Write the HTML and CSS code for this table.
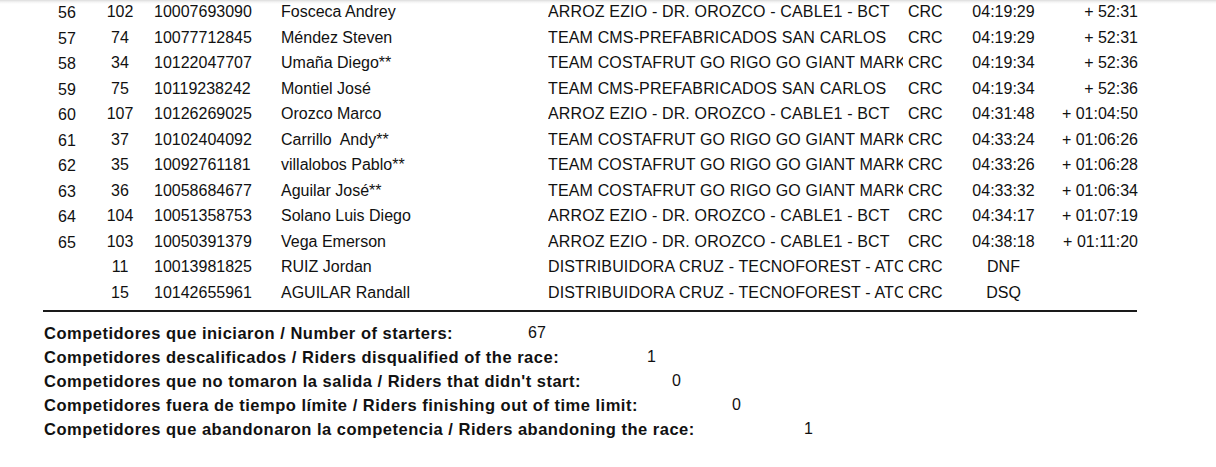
FILE: index.html
```html
<!DOCTYPE html>
<html lang="es">
<head>
<meta charset="utf-8">
<title>Clasificación</title>
<link rel="stylesheet" href="styles.css">
</head>
<body>
<div class="page">
  <div class="results">
    <div class="row"><span class="pos">56</span><span class="bib">102</span><span class="uci">10007693090</span><span class="name">Fosceca Andrey</span><span class="team">ARROZ EZIO - DR. OROZCO - CABLE1 - BCT</span><span class="nat">CRC</span><span class="time">04:19:29</span><span class="gap">+ 52:31</span></div>
    <div class="row"><span class="pos">57</span><span class="bib">74</span><span class="uci">10077712845</span><span class="name">Méndez Steven</span><span class="team">TEAM CMS-PREFABRICADOS SAN CARLOS</span><span class="nat">CRC</span><span class="time">04:19:29</span><span class="gap">+ 52:31</span></div>
    <div class="row"><span class="pos">58</span><span class="bib">34</span><span class="uci">10122047707</span><span class="name">Umaña Diego**</span><span class="team">TEAM COSTAFRUT GO RIGO GO GIANT MARKET</span><span class="nat">CRC</span><span class="time">04:19:34</span><span class="gap">+ 52:36</span></div>
    <div class="row"><span class="pos">59</span><span class="bib">75</span><span class="uci">10119238242</span><span class="name">Montiel José</span><span class="team">TEAM CMS-PREFABRICADOS SAN CARLOS</span><span class="nat">CRC</span><span class="time">04:19:34</span><span class="gap">+ 52:36</span></div>
    <div class="row"><span class="pos">60</span><span class="bib">107</span><span class="uci">10126269025</span><span class="name">Orozco Marco</span><span class="team">ARROZ EZIO - DR. OROZCO - CABLE1 - BCT</span><span class="nat">CRC</span><span class="time">04:31:48</span><span class="gap">+ 01:04:50</span></div>
    <div class="row"><span class="pos">61</span><span class="bib">37</span><span class="uci">10102404092</span><span class="name">Carrillo&nbsp; Andy**</span><span class="team">TEAM COSTAFRUT GO RIGO GO GIANT MARKET</span><span class="nat">CRC</span><span class="time">04:33:24</span><span class="gap">+ 01:06:26</span></div>
    <div class="row"><span class="pos">62</span><span class="bib">35</span><span class="uci">10092761181</span><span class="name">villalobos Pablo**</span><span class="team">TEAM COSTAFRUT GO RIGO GO GIANT MARKET</span><span class="nat">CRC</span><span class="time">04:33:26</span><span class="gap">+ 01:06:28</span></div>
    <div class="row"><span class="pos">63</span><span class="bib">36</span><span class="uci">10058684677</span><span class="name">Aguilar José**</span><span class="team">TEAM COSTAFRUT GO RIGO GO GIANT MARKET</span><span class="nat">CRC</span><span class="time">04:33:32</span><span class="gap">+ 01:06:34</span></div>
    <div class="row"><span class="pos">64</span><span class="bib">104</span><span class="uci">10051358753</span><span class="name">Solano Luis Diego</span><span class="team">ARROZ EZIO - DR. OROZCO - CABLE1 - BCT</span><span class="nat">CRC</span><span class="time">04:34:17</span><span class="gap">+ 01:07:19</span></div>
    <div class="row"><span class="pos">65</span><span class="bib">103</span><span class="uci">10050391379</span><span class="name">Vega Emerson</span><span class="team">ARROZ EZIO - DR. OROZCO - CABLE1 - BCT</span><span class="nat">CRC</span><span class="time">04:38:18</span><span class="gap">+ 01:11:20</span></div>
    <div class="row"><span class="pos"></span><span class="bib">11</span><span class="uci">10013981825</span><span class="name">RUIZ Jordan</span><span class="team">DISTRIBUIDORA CRUZ - TECNOFOREST - ATCR</span><span class="nat">CRC</span><span class="time">DNF</span><span class="gap"></span></div>
    <div class="row"><span class="pos"></span><span class="bib">15</span><span class="uci">10142655961</span><span class="name">AGUILAR Randall</span><span class="team">DISTRIBUIDORA CRUZ - TECNOFOREST - ATCR</span><span class="nat">CRC</span><span class="time">DSQ</span><span class="gap"></span></div>
  </div>
  <div class="rule"></div>
  <div class="summary">
    <div class="srow s1"><span class="label">Competidores que iniciaron / Number of starters:</span><span class="value">67</span></div>
    <div class="srow s2"><span class="label">Competidores descalificados / Riders disqualified of the race:</span><span class="value">1</span></div>
    <div class="srow s3"><span class="label">Competidores que no tomaron la salida / Riders that didn't start:</span><span class="value">0</span></div>
    <div class="srow s4"><span class="label">Competidores fuera de tiempo límite / Riders finishing out of time limit:</span><span class="value">0</span></div>
    <div class="srow s5"><span class="label">Competidores que abandonaron la competencia / Riders abandoning the race:</span><span class="value">1</span></div>
  </div>
</div>
</body>
</html>
```

FILE: styles.css
```css
html, body {
  margin: 0;
  padding: 0;
  background: #ffffff;
}

body {
  font-family: "Liberation Sans", Arial, sans-serif;
  font-size: 16px;
  color: #111111;
  width: 1216px;
  height: 467px;
  overflow: hidden;
  background: linear-gradient(to bottom, #dcdcdc 0, #f4f4f4 2px, #ffffff 4px);
}

.page {
  padding-left: 42px;
}

.results {
  display: flex;
  flex-direction: column;
  margin-top: -1px;
}

.row {
  display: grid;
  grid-template-columns: 50px 56px 6px 127px 267px 355px 5px 60px 71px 99px;
  grid-template-areas: "pos bib . uci name team . nat time gap";
  height: 25.5px;
  line-height: 25.5px;
  white-space: nowrap;
}

.pos { grid-area: pos; text-align: center; padding-top: 1px; }
.bib { grid-area: bib; text-align: center; }
.uci { grid-area: uci; }
.name { grid-area: name; }
.team { grid-area: team; overflow: hidden; letter-spacing: 0.15px; }
.nat { grid-area: nat; }
.time { grid-area: time; text-align: center; }
.gap { grid-area: gap; text-align: right; }

.rule {
  width: 1094px;
  margin-left: 1px;
  margin-top: 5px;
  border-top: 2.5px solid #1a1a1a;
}

.summary {
  display: flex;
  flex-direction: column;
  margin-top: 9px;
  padding-left: 2px;
}

.srow {
  display: grid;
  height: 24px;
  line-height: 24px;
  white-space: nowrap;
}

.label {
  font-weight: bold;
  font-size: 16.5px;
  letter-spacing: 0.5px;
}

.s1 { grid-template-columns: 484px auto; }
.s2 { grid-template-columns: 603px auto; }
.s3 { grid-template-columns: 628px auto; }
.s4 { grid-template-columns: 688px auto; }
.s5 { grid-template-columns: 760px auto; }
```
